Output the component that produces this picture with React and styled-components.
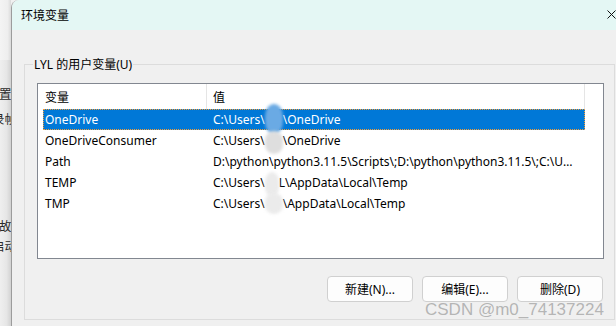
import React from "react";
import styled, { createGlobalStyle } from "styled-components";

const Global = createGlobalStyle`
  html, body { margin: 0; padding: 0; background: #f0f0f0; }
  #root { width: 616px; height: 326px; }
`;

const UI_FONT = `"Noto Sans", "Noto Sans CJK SC", sans-serif`;

const Screen = styled.div`
  position: relative;
  display: flex;
  width: 616px;
  height: 326px;
  overflow: hidden;
  font-family: ${UI_FONT};
  font-size: 12px;
  color: #000;
`;

const BackWindow = styled.div`
  flex: 0 0 11px;
  display: flex;
  flex-direction: column;
  overflow: hidden;
  background: linear-gradient(to right, #efefef 0%, #e6e6e6 60%, #d2d2d2 100%);
`;

const BackTop = styled.div`
  height: 60px;
  background: linear-gradient(to right, #f4f4f4 0%, #eeeeee 70%, #dadada 100%);
`;

const BackLine = styled.div`
  margin-top: ${(p) => p.$gap}px;
  height: 16px;
  line-height: 16px;
  font-family: "Noto Sans CJK SC", sans-serif;
  font-size: 12.5px;
  color: #2a2a2a;
  white-space: nowrap;
  text-indent: ${(p) => p.$shift}px;
`;

const Dialog = styled.div`
  flex: 1;
  display: flex;
  flex-direction: column;
  border-left: 1px solid #9c9c9c;
  border-top-left-radius: 8px;
  overflow: hidden;
  background: #f0f0f0;
`;

const TitleBar = styled.div`
  flex: 0 0 30px;
  display: flex;
  align-items: center;
  justify-content: space-between;
  padding-left: 9px;
  padding-bottom: 1px;
  box-sizing: border-box;
  background: #e4f7f4;
`;

const Title = styled.span`
  font-family: "Noto Sans CJK SC", sans-serif;
  font-size: 12px;
  line-height: 16px;
  color: #000;
`;

const Body = styled.div`
  flex: 1;
  padding: 34px 0 0 12px;
`;

const Group = styled.div`
  width: 591px;
  height: 256px;
  box-sizing: border-box;
  border: 1px solid #dcdcdc;
  display: flex;
  flex-direction: column;
`;

const Legend = styled.div`
  align-self: flex-start;
  margin: -8px 0 0 8px;
  padding: 0 1px;
  line-height: 15px;
  background: #f0f0f0;
`;

const List = styled.div`
  margin: 11px 0 0 12px;
  width: 567px;
  height: 176px;
  box-sizing: border-box;
  border: 1px solid #828790;
  background: #fff;
  display: flex;
  flex-direction: column;
`;

const Header = styled.div`
  display: flex;
  height: 25px;
  flex: 0 0 25px;
`;

const HeaderCell = styled.div`
  width: ${(p) => p.$w}px;
  box-sizing: border-box;
  padding-left: ${(p) => p.$pad}px;
  border-right: 1px solid #e5e5e5;
  display: flex;
  align-items: center;
`;

const Rows = styled.div`
  margin-left: 5px;
  width: 542px;
  display: flex;
  flex-direction: column;
`;

const Row = styled.div`
  display: flex;
  align-items: center;
  height: 21px;
  background: ${(p) => (p.$selected ? "#0078d7" : "transparent")};
  color: ${(p) => (p.$selected ? "#fff" : "#000")};
  outline: ${(p) => (p.$selected ? "1px dotted #f29d38" : "none")};
  outline-offset: -1px;
`;

const NameCell = styled.div`
  width: 164px;
  flex: 0 0 164px;
  box-sizing: border-box;
  padding-left: 2px;
  white-space: nowrap;
  overflow: hidden;
`;

const ValueCell = styled.div`
  flex: 1;
  min-width: 0;
  padding: 0 ${(p) => (p.$clip ? 8 : 6)}px 0 6px;
  white-space: nowrap;
  overflow: ${(p) => (p.$clip ? "hidden" : "visible")};
  text-overflow: ellipsis;
`;

const Smudge = styled.span`
  position: relative;
  display: inline-block;
  width: ${(p) => p.$w}px;
  height: 12px;
  vertical-align: -2px;
  &::before {
    content: "";
    position: absolute;
    left: 0;
    right: 0;
    top: ${(p) => p.$top}px;
    bottom: ${(p) => p.$bottom}px;
    border-radius: 50% / 40%;
    background: ${(p) => p.$color};
    filter: blur(1.5px);
  }
`;

const ButtonRow = styled.div`
  display: flex;
  justify-content: flex-end;
  gap: 9px;
  margin-top: 17px;
  padding-right: 11px;
`;

const Button = styled.button`
  width: 86px;
  height: 26px;
  box-sizing: border-box;
  border: 1px solid #d0d0d0;
  border-radius: 4px;
  background: #fdfdfd;
  font-family: ${UI_FONT};
  font-size: 12px;
  color: #000;
  padding: 0;
`;

const Watermark = styled.div`
  position: absolute;
  left: 425px;
  top: 301px;
  font-family: "Liberation Sans", Arial, sans-serif;
  font-size: 17px;
  line-height: 17px;
  color: rgba(130, 130, 130, 0.55);
  white-space: nowrap;
  pointer-events: none;
`;

const CloseIcon = () => (
  <svg width="9" height="9" viewBox="0 0 9 9">
    <path d="M0.5 0.5 L8.5 8.5 M8.5 0.5 L0.5 8.5" stroke="#111" strokeWidth="1" fill="none" />
  </svg>
);

export default function App() {
  return (
    <>
      <Global />
      <Screen>
        <BackWindow>
          <BackTop />
          <BackLine $gap={26} $shift={-1}>置</BackLine>
          <BackLine $gap={9} $shift={-8}>录帧</BackLine>
          <BackLine $gap={91} $shift={-1}>故障</BackLine>
          <BackLine $gap={4} $shift={-8}>启动</BackLine>
        </BackWindow>
        <Dialog>
          <TitleBar>
            <Title>环境变量</Title>
            <CloseIcon />
          </TitleBar>
          <Body>
            <Group>
              <Legend>LYL 的用户变量(U)</Legend>
              <List>
                <Header>
                  <HeaderCell $w={169} $pad={7}>变量</HeaderCell>
                  <HeaderCell $w={378} $pad={6}>值</HeaderCell>
                </Header>
                <Rows>
                  <Row $selected>
                    <NameCell>OneDrive</NameCell>
                    <ValueCell>
                      C:\Users\<Smudge $w={18} $top={-10} $bottom={-8} $color="#6aaae4" />\OneDrive
                    </ValueCell>
                  </Row>
                  <Row>
                    <NameCell>OneDriveConsumer</NameCell>
                    <ValueCell>
                      C:\Users\<Smudge $w={18} $top={-4} $bottom={-7} $color="#dedede" />\OneDrive
                    </ValueCell>
                  </Row>
                  <Row>
                    <NameCell>Path</NameCell>
                    <ValueCell $clip>
                      D:\python\python3.11.5\Scripts\;D:\python\python3.11.5\;C:\Users\LYL\AppData\Local\Microsoft\WindowsApps;
                    </ValueCell>
                  </Row>
                  <Row>
                    <NameCell>TEMP</NameCell>
                    <ValueCell>
                      C:\Users\<Smudge $w={14} $top={-5} $bottom={-8} $color="#ebebeb" />L\AppData\Local\Temp
                    </ValueCell>
                  </Row>
                  <Row>
                    <NameCell>TMP</NameCell>
                    <ValueCell>
                      C:\Users\<Smudge $w={18} $top={-5} $bottom={-4} $color="#ebebeb" />\AppData\Local\Temp
                    </ValueCell>
                  </Row>
                </Rows>
              </List>
              <ButtonRow>
                <Button>新建(N)...</Button>
                <Button>编辑(E)...</Button>
                <Button>删除(D)</Button>
              </ButtonRow>
            </Group>
          </Body>
        </Dialog>
        <Watermark>CSDN @m0_74137224</Watermark>
      </Screen>
    </>
  );
}
